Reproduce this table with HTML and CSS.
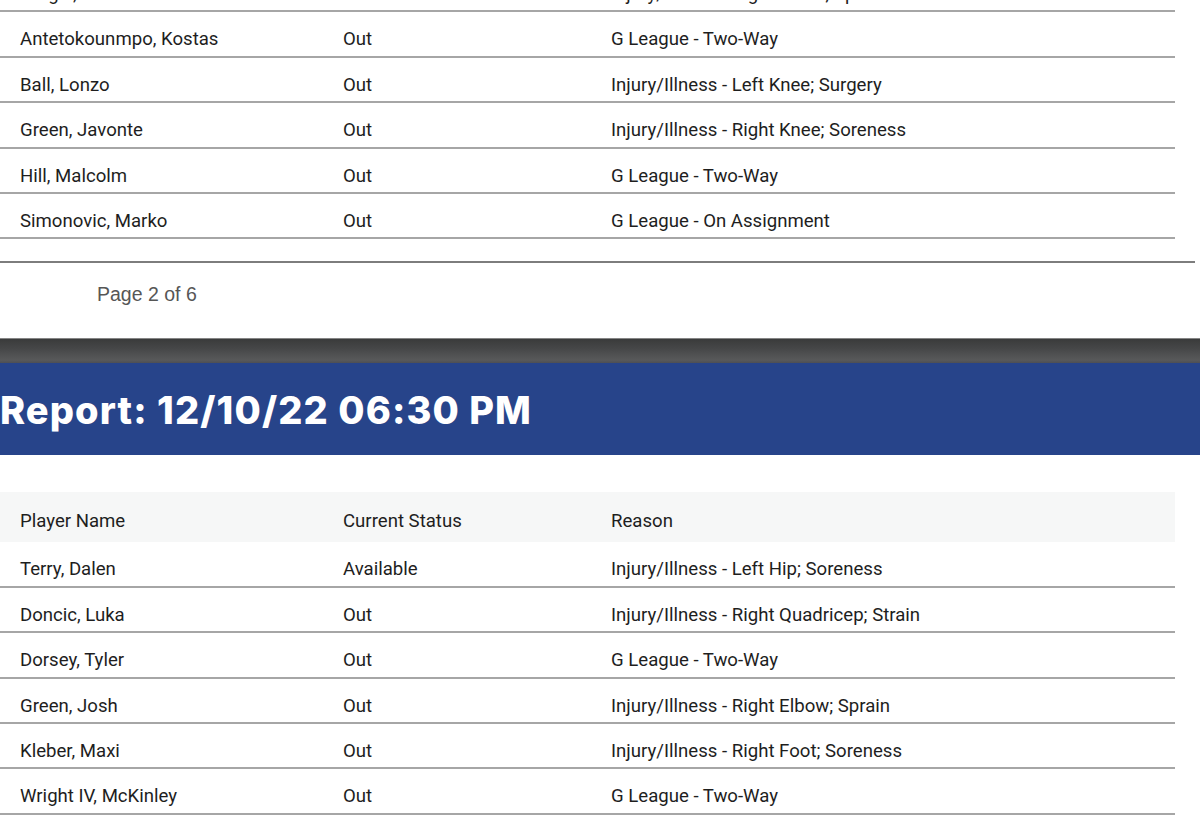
FILE: index.html
```html
<!DOCTYPE html>
<html lang="en">
<head>
<meta charset="utf-8">
<title>Injury Report</title>
<link rel="stylesheet" href="styles.css">
</head>
<body>
<div class="doc">
  <section class="report report-prev">
    <div class="row"><div>Dragic, Goran</div><div>Out</div><div>Injury/Illness - Right Ankle; Sprain</div></div>
    <div class="row"><div>Antetokounmpo, Kostas</div><div>Out</div><div>G League - Two-Way</div></div>
    <div class="row"><div>Ball, Lonzo</div><div>Out</div><div>Injury/Illness - Left Knee; Surgery</div></div>
    <div class="row"><div>Green, Javonte</div><div>Out</div><div>Injury/Illness - Right Knee; Soreness</div></div>
    <div class="row"><div>Hill, Malcolm</div><div>Out</div><div>G League - Two-Way</div></div>
    <div class="row"><div>Simonovic, Marko</div><div>Out</div><div>G League - On Assignment</div></div>
  </section>

  <div class="page-rule"></div>
  <div class="page-footer">Page 2 of 6</div>
  <div class="page-gap"></div>

  <header class="report-head">
    <h1>Report: 12/10/22 06:30 PM</h1>
  </header>

  <section class="report report-next">
    <div class="row row-head"><div>Player Name</div><div>Current Status</div><div>Reason</div></div>
    <div class="row"><div>Terry, Dalen</div><div>Available</div><div>Injury/Illness - Left Hip; Soreness</div></div>
    <div class="row"><div>Doncic, Luka</div><div>Out</div><div>Injury/Illness - Right Quadricep; Strain</div></div>
    <div class="row"><div>Dorsey, Tyler</div><div>Out</div><div>G League - Two-Way</div></div>
    <div class="row"><div>Green, Josh</div><div>Out</div><div>Injury/Illness - Right Elbow; Sprain</div></div>
    <div class="row"><div>Kleber, Maxi</div><div>Out</div><div>Injury/Illness - Right Foot; Soreness</div></div>
    <div class="row"><div>Wright IV, McKinley</div><div>Out</div><div>G League - Two-Way</div></div>
  </section>
</div>
</body>
</html>
```

FILE: styles.css
```css
html, body {
  margin: 0;
  padding: 0;
  background: #ffffff;
  overflow: hidden;
}

.doc {
  width: 1200px;
  font-family: Roboto, "Liberation Sans", sans-serif;
  color: #1e1e1e;
}

.report {
  width: 1175px;
}

.report-prev {
  margin-top: -33px;
}

.row {
  display: grid;
  grid-template-columns: 323px 268px 1fr;
  padding-left: 20px;
  height: 45.4px;
  box-sizing: border-box;
  padding-top: 17px;
  border-bottom: 2px solid #a6a6a6;
  font-size: 18.6px;
  line-height: 20px;
  white-space: nowrap;
}

.row-head {
  height: 50px;
  padding-top: 19px;
  border-bottom: none;
  background: #f6f7f7;
}

.page-rule {
  margin-top: 22px;
  width: 1195px;
  height: 2px;
  background: #7d7d7d;
}

.page-footer {
  padding: 20px 0 0 97px;
  height: 22px;
  font-family: "Liberation Sans", Arial, sans-serif;
  font-size: 19.5px;
  line-height: 22px;
  color: #565656;
}

.page-gap {
  height: 33px;
}

.report-head {
  height: 117px;
  box-sizing: border-box;
  background:
    linear-gradient(to bottom, #cfcfcf 0, #3a3b3b 1px, #454647 40%, #58595a 88%, #4d4f55 100%) top / 100% 25px no-repeat,
    #27448a;
  padding-top: 50px;
  margin-bottom: 37px;
}

.report-head h1 {
  margin: 0;
  padding-left: 0;
  font-family: Inter, "Open Sans", sans-serif;
  font-weight: 800;
  font-size: 38px;
  line-height: 44px;
  color: #ffffff;
  letter-spacing: 1.1px;
}
```
